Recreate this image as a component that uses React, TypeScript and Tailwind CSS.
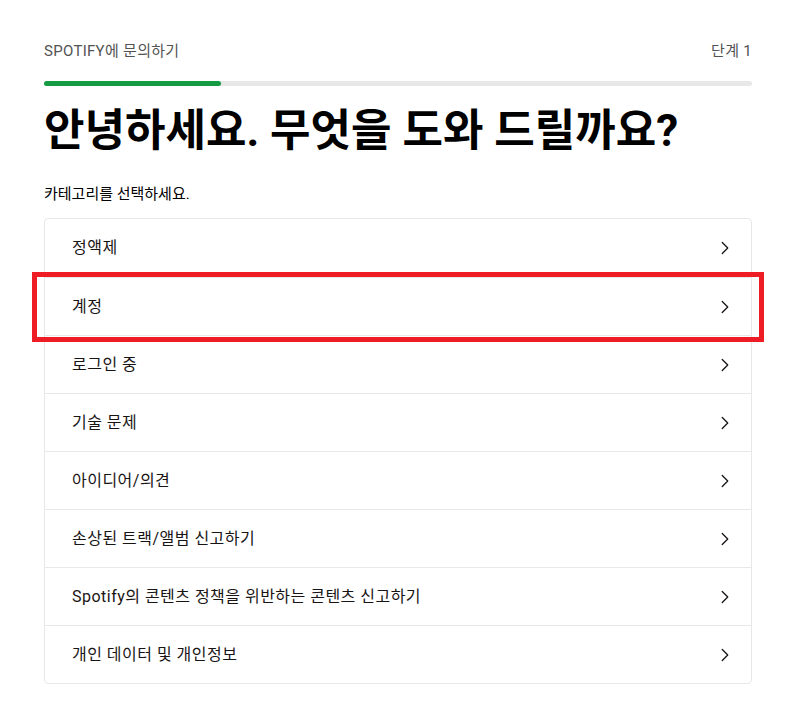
import { ChevronRight } from 'lucide-react'

const categories = [
  '정액제',
  '계정',
  '로그인 중',
  '기술 문제',
  '아이디어/의견',
  '손상된 트랙/앨범 신고하기',
  'Spotify의 콘텐츠 정책을 위반하는 콘텐츠 신고하기',
  '개인 데이터 및 개인정보',
]

export default function App() {
  return (
    <div
      className="min-h-[715px] w-full bg-white text-[#191414]"
      style={{ fontFamily: 'Roboto, "Noto Sans CJK KR", sans-serif' }}
    >
      <div className="ml-[44px] w-[708px] pt-[40px]">
        <div className="flex items-center justify-between text-[15px] leading-[22px] tracking-[0.02em] text-[#535353]">
          <span>SPOTIFY에 문의하기</span>
          <span>단계 1</span>
        </div>
        <div className="mt-[19px] h-[5px] w-full rounded-full bg-[#e8e8e8]">
          <div className="h-full w-[177px] rounded-full bg-[#169b45]" />
        </div>
        <h1 className="mt-[15px] text-[44px] font-bold leading-[60px] text-black">
          안녕하세요. 무엇을 도와 드릴까요?
        </h1>
        <p className="mt-[23px] text-[15px] leading-[20px] text-black">카테고리를 선택하세요.</p>
        <div className="relative mt-[14px] rounded-[4px] border border-[#e8e8e8]">
          {categories.map((c, i) => (
            <div
              key={c}
              className={`flex h-[58px] items-center justify-between pl-[27px] pr-[15px] text-[16px] tracking-[0.03em] text-[#191414] ${
                i > 0 ? 'border-t border-[#e8e8e8]' : ''
              }`}
            >
              <span>{c}</span>
              <ChevronRight size={22} strokeWidth={1.4} className="text-[#191414]" />
            </div>
          ))}
          <div className="pointer-events-none absolute left-[-13px] top-[53px] h-[70px] w-[732px] border-[5px] border-[#ee1c25]" />
        </div>
      </div>
    </div>
  )
}
